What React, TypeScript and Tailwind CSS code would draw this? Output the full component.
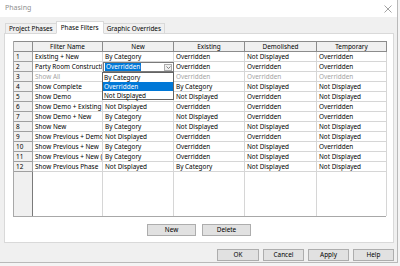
import React from "react";

type Row = [string, string, string, string, string];

const rows: Row[] = [
    ["Existing + New", "By Category", "Overridden", "Not Displayed", "Overridden"],
    ["Party Room Construction", "Overridden", "Overridden", "Overridden", "Overridden"],
    ["Show All", "By Category", "Overridden", "Overridden", "Overridden"],
    ["Show Complete", "By Category", "By Category", "Not Displayed", "Not Displayed"],
    ["Show Demo", "Not Displayed", "Not Displayed", "Overridden", "Not Displayed"],
    ["Show Demo + Existing", "Not Displayed", "Overridden", "Overridden", "Overridden"],
    ["Show Demo + New", "By Category", "Not Displayed", "Overridden", "Overridden"],
    ["Show New", "By Category", "Not Displayed", "Not Displayed", "Not Displayed"],
    ["Show Previous + Demo", "Not Displayed", "Overridden", "Overridden", "Not Displayed"],
    ["Show Previous + New", "By Category", "Overridden", "Not Displayed", "Overridden"],
    ["Show Previous + New (Copy)", "By Category", "Overridden", "Not Displayed", "Not Displayed"],
    ["Show Previous Phase", "Not Displayed", "By Category", "Not Displayed", "Not Displayed"],
];

const cols = "grid grid-cols-[19px_70px_71px_71px_72px_70px]";
const headers = ["Filter Name", "New", "Existing", "Demolished", "Temporary"];

function Btn({ label, w }: { label: string; w: string }) {
    return (
        <button className={`${w} h-[12px] bg-[#e1e1e1] border border-[#adadad] text-[#000] leading-[10px] text-center`}>
            {label}
        </button>
    );
}

function Tab({ label, active }: { label: string; active?: boolean }) {
    return active ? (
        <div className="h-[13px] px-[4px] bg-white border border-[#d9d9d9] border-b-white -mb-px relative z-10 flex items-center -mx-px">
            {label}
        </div>
    ) : (
        <div className="h-[10px] px-[3px] bg-[#f0f0f0] border border-[#d9d9d9] border-b-0 flex items-center">{label}</div>
    );
}

export default function App() {
    return (
        <div className="w-[400px] h-[266px] overflow-hidden bg-[#f4f4f4] font-['Noto_Sans',sans-serif] text-[6.4px] text-black">
            <div className="w-[398px] h-[263px] bg-[#f0f0f0] border-r border-b border-[#b9b9b9] flex flex-col">
                {/* Title bar */}
                <div className="h-[17px] bg-white flex items-center justify-between pl-[5px] pr-[5px] shrink-0">
                    <span className="text-[#8f8f8f] text-[7px]">Phasing</span>
                    <svg width="8" height="8" viewBox="0 0 8 8">
                        <path d="M0.5 0.5 L7.5 7.5 M7.5 0.5 L0.5 7.5" stroke="#8a8a8a" strokeWidth="0.8" />
                    </svg>
                </div>

                {/* Tabs */}
                <div className="flex items-end h-[12px] mt-[4px] pl-[5px]">
                    <Tab label="Project Phases" />
                    <Tab label="Phase Filters" active />
                    <Tab label="Graphic Overrides" />
                </div>

                {/* Panel */}
                <div className="mx-[4px] w-[390px] h-[210px] bg-white border border-[#d9d9d9] px-[8px] pt-[7px] flex flex-col">
                    <div className="relative w-[373px] h-[176px] border-l border-b border-[#a8a8a8] flex flex-col">
                        <div className={`${cols} h-[11px] shrink-0`}>
                            <div className="bg-[#f0f0f0] border border-[#8c8c8c] border-l-0" />
                            {headers.map((h) => (
                                <div
                                    key={h}
                                    className="bg-[#f0f0f0] border border-l-0 border-[#8c8c8c] text-center leading-[9px] whitespace-nowrap overflow-hidden"
                                >
                                    {h}
                                </div>
                            ))}
                        </div>
                        {rows.map((r, i) => {
                            const grey = i === 2;
                            return (
                                <div key={i} className={`${cols} h-[10px] shrink-0`}>
                                    <div className="bg-[#f0f0f0] border-r border-b border-[#a0a0a0] px-[2px] leading-[9px]">
                                        {i + 1}
                                    </div>
                                    {r.map((v, j) =>
                                        i === 1 && j === 1 ? (
                                            <div
                                                key={j}
                                                className="border border-[#7a7a7a] flex items-center justify-between pl-[1px] pr-[1px] overflow-hidden"
                                            >
                                                <span className="bg-[#0078d7] text-white leading-[8px] px-[1px]">{v}</span>
                                                <span className="w-[8px] h-[7px] border border-[#adadad] bg-[#f0f0f0] flex items-center justify-center">
                                                    <svg width="5" height="3" viewBox="0 0 5 3">
                                                        <path d="M0.5 0.5 L2.5 2.5 L4.5 0.5" stroke="#555" strokeWidth="0.7" fill="none" />
                                                    </svg>
                                                </span>
                                            </div>
                                        ) : (
                                            <div
                                                key={j}
                                                className={`border-r border-b border-[#d6d6d6] px-[2px] leading-[9px] whitespace-nowrap overflow-hidden ${grey ? "text-[#a3a3a3]" : ""}`}
                                            >
                                                {v}
                                            </div>
                                        )
                                    )}
                                </div>
                            );
                        })}
                        <div className={`${cols} flex-1`}>
                            <div className="bg-[#f0f0f0] border-r border-[#7a7a7a]" />
                            {headers.map((h) => (
                                <div key={h} className="border-r border-[#d6d6d6]" />
                            ))}
                        </div>

                        {/* Open dropdown list */}
                        <div className="absolute left-[88px] top-[31px] w-[72px] h-[28px] bg-white border border-[#646464] flex flex-col">
                            <div className="h-[9px] leading-[9px] px-[1px]">By Category</div>
                            <div className="h-[9px] leading-[9px] px-[1px] bg-[#0078d7] text-white">Overridden</div>
                            <div className="h-[9px] leading-[9px] px-[1px]">Not Displayed</div>
                        </div>
                    </div>

                    <div className="flex justify-center gap-[6px] mt-[7px]">
                        <Btn label="New" w="w-[49px]" />
                        <Btn label="Delete" w="w-[49px]" />
                    </div>
                </div>

                {/* Dialog buttons */}
                <div className="flex justify-end gap-[4px] pr-[3px] mt-[6px]">
                    <Btn label="OK" w="w-[42px]" />
                    <Btn label="Cancel" w="w-[41px]" />
                    <Btn label="Apply" w="w-[41px]" />
                    <Btn label="Help" w="w-[41px]" />
                </div>
            </div>
        </div>
    );
}
